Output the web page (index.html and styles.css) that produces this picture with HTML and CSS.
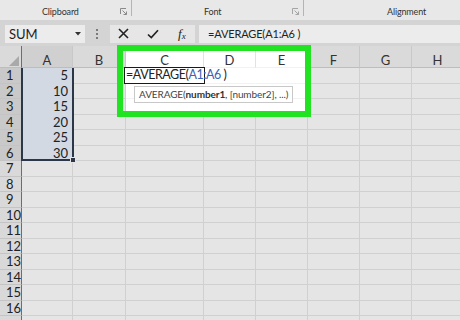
FILE: index.html
```html
<!DOCTYPE html>
<html>
<head>
<meta charset="utf-8">
<link rel="stylesheet" href="styles.css">
</head>
<body>
<div class="app">
  <div class="ribbon">
    <div class="group g-clip">
      <span class="label">Clipboard</span>
      <svg class="launcher" width="7" height="7" viewBox="0 0 7 7"><path d="M0.5 6V0.5H6" fill="none" stroke="#8a8a8a"/><path d="M2.5 2.5L6.5 6.5M6.5 3.5V6.5H3.5" fill="none" stroke="#8a8a8a"/></svg>
    </div>
    <div class="sep"></div>
    <div class="group g-font">
      <span class="label">Font</span>
      <svg class="launcher" width="7" height="7" viewBox="0 0 7 7"><path d="M0.5 6V0.5H6" fill="none" stroke="#a5a5a5"/><path d="M2.5 2.5L6.5 6.5M6.5 3.5V6.5H3.5" fill="none" stroke="#a5a5a5"/></svg>
    </div>
    <div class="sep"></div>
    <div class="group g-align">
      <span class="label">Alignment</span>
    </div>
  </div>

  <div class="fbar">
    <div class="namebox">
      <span>SUM</span>
      <svg width="6" height="4" viewBox="0 0 6 4"><path d="M0 0H6L3 3.5Z" fill="#333"/></svg>
    </div>
    <div class="dots"><i></i><i></i><i></i></div>
    <div class="btns">
      <svg width="11" height="11" viewBox="0 0 11 11"><path d="M1 1L10 10M10 1L1 10" stroke="#222" stroke-width="1.6"/></svg>
      <svg width="12" height="10" viewBox="0 0 12 10"><path d="M1 5.5L4.3 8.6L11 1.2" fill="none" stroke="#222" stroke-width="1.7"/></svg>
      <span class="fx">f<sub>x</sub></span>
    </div>
    <div class="finput">=AVERAGE(A1:A6 )</div>
  </div>

  <div class="sheet">
    <div class="c h corner"><svg width="10" height="10" viewBox="0 0 10 10"><path d="M10 0V10H0Z" fill="#a9a9a9"/></svg></div>
    <div class="c h on">A</div><div class="c h">B</div><div class="c h w">C</div><div class="c h w">D</div><div class="c h w">E</div><div class="c h">F</div><div class="c h">G</div><div class="c h">H</div>

    <div class="c rh on">1</div><div class="c v sel">5</div><div class="c"></div><div class="c w"></div><div class="c w"></div><div class="c w"></div><div class="c"></div><div class="c"></div><div class="c"></div>
    <div class="c rh on">2</div><div class="c v sel">10</div><div class="c"></div><div class="c w"></div><div class="c w"></div><div class="c w"></div><div class="c"></div><div class="c"></div><div class="c"></div>
    <div class="c rh on">3</div><div class="c v sel">15</div><div class="c"></div><div class="c w"></div><div class="c w"></div><div class="c w"></div><div class="c"></div><div class="c"></div><div class="c"></div>
    <div class="c rh on">4</div><div class="c v sel">20</div><div class="c"></div><div class="c"></div><div class="c"></div><div class="c"></div><div class="c"></div><div class="c"></div><div class="c"></div>
    <div class="c rh on">5</div><div class="c v sel">25</div><div class="c"></div><div class="c"></div><div class="c"></div><div class="c"></div><div class="c"></div><div class="c"></div><div class="c"></div>
    <div class="c rh on">6</div><div class="c v sel">30</div><div class="c"></div><div class="c"></div><div class="c"></div><div class="c"></div><div class="c"></div><div class="c"></div><div class="c"></div>
    <div class="c rh">7</div><div class="c"></div><div class="c"></div><div class="c"></div><div class="c"></div><div class="c"></div><div class="c"></div><div class="c"></div><div class="c"></div>
    <div class="c rh">8</div><div class="c"></div><div class="c"></div><div class="c"></div><div class="c"></div><div class="c"></div><div class="c"></div><div class="c"></div><div class="c"></div>
    <div class="c rh">9</div><div class="c"></div><div class="c"></div><div class="c"></div><div class="c"></div><div class="c"></div><div class="c"></div><div class="c"></div><div class="c"></div>
    <div class="c rh">10</div><div class="c"></div><div class="c"></div><div class="c"></div><div class="c"></div><div class="c"></div><div class="c"></div><div class="c"></div><div class="c"></div>
    <div class="c rh">11</div><div class="c"></div><div class="c"></div><div class="c"></div><div class="c"></div><div class="c"></div><div class="c"></div><div class="c"></div><div class="c"></div>
    <div class="c rh">12</div><div class="c"></div><div class="c"></div><div class="c"></div><div class="c"></div><div class="c"></div><div class="c"></div><div class="c"></div><div class="c"></div>
    <div class="c rh">13</div><div class="c"></div><div class="c"></div><div class="c"></div><div class="c"></div><div class="c"></div><div class="c"></div><div class="c"></div><div class="c"></div>
    <div class="c rh">14</div><div class="c"></div><div class="c"></div><div class="c"></div><div class="c"></div><div class="c"></div><div class="c"></div><div class="c"></div><div class="c"></div>
    <div class="c rh">15</div><div class="c"></div><div class="c"></div><div class="c"></div><div class="c"></div><div class="c"></div><div class="c"></div><div class="c"></div><div class="c"></div>
    <div class="c rh">16</div><div class="c"></div><div class="c"></div><div class="c"></div><div class="c"></div><div class="c"></div><div class="c"></div><div class="c"></div><div class="c"></div>
    <div class="c rh"></div><div class="c"></div><div class="c"></div><div class="c"></div><div class="c"></div><div class="c"></div><div class="c"></div><div class="c"></div><div class="c"></div>
  </div>

  <div class="selbox"><span class="handle"></span></div>
  <div class="hlbox"></div>
  <div class="editor">=AVERAGE(<span class="ref">A1:A6</span> )</div>
  <div class="tip">AVERAGE(<b>number1</b>, [number2], ...)</div>
</div>
</body>
</html>
```

FILE: styles.css
```css
* { box-sizing: border-box; }
html, body { margin: 0; padding: 0; }
body {
  width: 460px;
  height: 320px;
  overflow: hidden;
  background: #e5e5e5;
  font-family: Lato, "Open Sans", sans-serif;
  color: #222;
}
.app {
  position: relative;
  width: 460px;
  height: 320px;
  overflow: hidden;
}

/* ribbon */
.ribbon {
  display: flex;
  height: 20px;
  background: #e8e8e8;
}
.group {
  display: flex;
  align-items: center;
  height: 20px;
  padding-top: 2px;
}
.label {
  font-size: 9px;
  letter-spacing: -0.15px;
  color: #333;
}
.g-clip { width: 131px; padding-left: 42px; }
.g-font { width: 171px; padding-left: 72px; }
.g-align { flex: 1; padding-left: 83px; }
.launcher { margin-left: auto; margin-right: 4px; }
.sep {
  width: 1px;
  height: 16px;
  background: #b4b4b4;
}

/* formula bar */
.fbar {
  display: flex;
  align-items: center;
  height: 26px;
  background: #d4d4d4;
  padding-top: 1px;
}
.namebox {
  display: flex;
  align-items: center;
  justify-content: space-between;
  width: 80px;
  height: 18px;
  margin-left: 5px;
  padding: 0 4px 0 4px;
  background: #ececec;
  font-size: 13px;
}
.dots {
  display: flex;
  flex-direction: column;
  gap: 2px;
  margin-left: 11px;
}
.dots i {
  display: block;
  width: 2px;
  height: 2px;
  background: #7a7a7a;
}
.btns {
  display: flex;
  align-items: center;
  gap: 18px;
  width: 85px;
  height: 18px;
  margin-left: 12px;
  padding-left: 8px;
  background: #e6e6e6;
}
.fx {
  font-family: "Liberation Serif", serif;
  font-style: italic;
  font-size: 13px;
  margin-left: 1px;
}
.fx sub { font-size: 9px; vertical-align: -1px; }
.finput {
  flex: 1;
  height: 18px;
  margin-left: 4px;
  padding-left: 9px;
  background: #ececec;
  font-size: 11px;
  letter-spacing: -0.15px;
  line-height: 18px;
}

/* sheet */
.sheet {
  display: grid;
  grid-template-columns: 22px 51px 53px 78px 52px 52px 52px 52px 52px;
  grid-template-rows: 22px;
  grid-auto-rows: 15.5px;
}
.c {
  border-right: 1px solid #d0d0d0;
  border-bottom: 1px solid #d0d0d0;
  background: #e5e5e5;
  font-size: 13px;
  overflow: hidden;
  white-space: nowrap;
}
.h {
  background: #dadada;
  border-bottom-color: #bdbdbd;
  border-right-color: #c8c8c8;
  text-align: center;
  color: #333;
  padding-top: 7px;
  line-height: 15px;
}
.h.on { background: #d0d0d0; }
.h.w { background: #fff; border-right-color: #e2e2e2; }
.corner {
  display: flex;
  align-items: flex-end;
  justify-content: flex-end;
  padding: 0 2px 1px 0;
  border-right: 1px solid #6e6e6e;
}
.rh {
  background: #d9d9d9;
  border-right: 1px solid #6e6e6e;
  border-bottom-color: #c4c4c4;
  padding-left: 6px;
  line-height: 15px;
  color: #222;
}
.rh.on { background: #c9c9c9; }
.v {
  text-align: right;
  padding-right: 4px;
  line-height: 15px;
}
.sel { background: #d3d9e2; border-bottom-color: #d3d9e2; border-right-color: #d3d9e2; }
.w { background: #fff; border-right-color: #fff; border-bottom-color: #f2f2f2; }

/* overlays */
.selbox {
  position: absolute;
  left: 21px;
  top: 68px;
  width: 53px;
  height: 93px;
  border: 2px solid #2b3649;
  border-top: none;
}
.handle {
  position: absolute;
  right: -4px;
  bottom: -4px;
  width: 6px;
  height: 6px;
  background: #2b3649;
  border: 1px solid #e5e5e5;
}
.hlbox {
  position: absolute;
  left: 117px;
  top: 45px;
  width: 194px;
  height: 72px;
  border: 6px solid #22e322;
}
.editor {
  position: absolute;
  left: 124px;
  top: 67px;
  width: 81px;
  height: 17px;
  border: 1.5px solid #1a1a1a;
  background: #fff;
  padding-left: 1px;
  font-size: 12.5px;
  letter-spacing: -0.45px;
  line-height: 14px;
  white-space: nowrap;
  overflow: visible;
}
.ref { color: #3a62b5; }
.tip {
  position: absolute;
  left: 134px;
  top: 86px;
  width: 159px;
  height: 17px;
  background: #fff;
  border: 1px solid #c8c8c8;
  padding-left: 4px;
  font-size: 10px;
  letter-spacing: -0.1px;
  line-height: 15px;
  color: #444;
  white-space: nowrap;
}
.tip b { font-weight: 700; color: #333; }
```
